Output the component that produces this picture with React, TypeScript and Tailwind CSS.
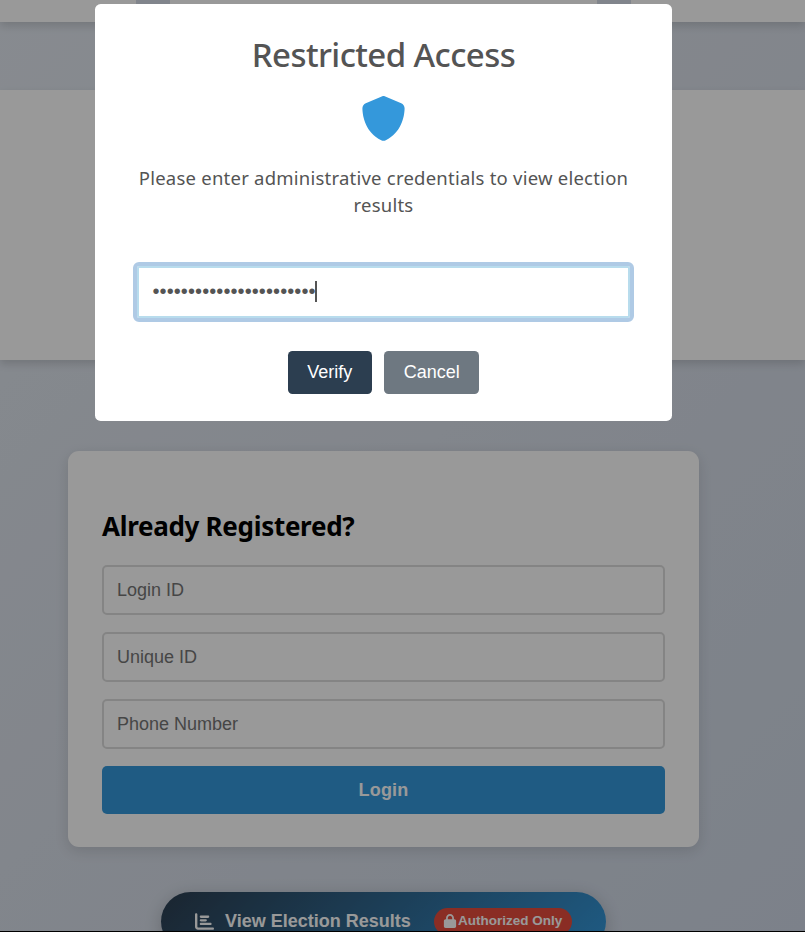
import { FaChartBar, FaLock, FaShield } from "react-icons/fa6";

const fields = ["Login ID", "Unique ID", "Phone Number"];

function Backdrop() {
  return (
    <div className="flex h-[932px] w-full flex-col overflow-hidden bg-[linear-gradient(135deg,#e2e8f0_0%,#d9dfe9_50%,#cfd8e6_100%)]">
      <div className="flex h-[22px] shrink-0 justify-between bg-white px-[136px] pr-[174px] shadow-[0_4px_8px_rgba(0,0,0,0.14)]">
        <div className="h-[9px] w-[34px] bg-[#d8deea]" />
        <div className="h-[9px] w-[34px] bg-[#d8deea]" />
      </div>
      <div className="mt-[68px] h-[270px] shrink-0 bg-white shadow-[0_4px_8px_rgba(0,0,0,0.14)]" />
      <section className="mt-[91px] ml-[68px] h-[396.4px] w-[631px] shrink-0 rounded-[11px] bg-white px-[34px] pt-[57px] shadow-[0_4px_14px_rgba(0,0,0,0.12)]">
        <h2 className="h-[36px] text-[26px] leading-[36px] font-bold tracking-[-0.3px] whitespace-nowrap text-black">
          Already Registered?
        </h2>
        <div className="mt-[21.4px] flex flex-col gap-[17px]">
          {fields.map((name) => (
            <input
              key={name}
              placeholder={name}
              className="h-[49.9px] w-full rounded-[5px] border-2 border-[#dddddd] bg-white px-[13px] pt-px font-['Liberation_Sans',Arial,sans-serif] text-[18px] placeholder:text-[#757575]"
            />
          ))}
        </div>
        <button className="mt-[16.5px] h-[48px] w-full rounded-[5px] bg-[#3498db] pt-px font-['Liberation_Sans',Arial,sans-serif] text-[18px] font-bold tracking-[0.2px] text-white">
          Login
        </button>
      </section>
      <button className="mt-[44.6px] ml-[161px] flex h-[59px] w-[445px] shrink-0 items-center rounded-full bg-[linear-gradient(135deg,#2c3e50,#3498db)] pl-[34px] font-['Liberation_Sans',Arial,sans-serif] text-[18px] font-bold text-white shadow-[0_4px_17px_rgba(0,0,0,0.2)]">
        <FaChartBar className="size-[19px]" />
        <span className="ml-[11px] pt-px whitespace-nowrap">View Election Results</span>
        <span className="ml-[23.5px] flex h-[27px] w-[138px] items-center justify-center gap-[1px] rounded-full bg-[#e74c3c] pr-px text-[13.5px] whitespace-nowrap">
          <FaLock className="size-[14px]" />
          Authorized Only
        </span>
      </button>
    </div>
  );
}

function AccessDialog() {
  return (
    <div className="absolute top-[4.4px] left-[95.2px] flex h-[416.2px] w-[576.6px] flex-col items-center rounded-[5.6px] bg-white text-[#545454]">
      <h1 className="mt-[28px] h-[46px] text-[33px] leading-[46px] font-medium tracking-[-0.58px] whitespace-nowrap">
        Restricted Access
      </h1>
      <FaShield className="mt-[17.5px] size-[45px] text-[#3498db]" />
      <p className="mt-[23.5px] w-[520px] text-center text-[18.5px] leading-[27px] tracking-[0.23px]">
        Please enter administrative credentials to view election
        <br />
        results
      </p>
      <div className="mt-[43.5px] flex h-[60px] w-[501px] items-center rounded-[6px] border-4 border-[#afcae5] bg-white pl-[15.5px] ring-[#b8dced] ring-inset ring-2">
        <span className="pb-px font-['Liberation_Sans',Arial,sans-serif] text-[20px] tracking-[0.09px]">
          •••••••••••••••••••••••
        </span>
        <span className="-ml-px h-[21px] w-[2px] bg-[#545454]" />
      </div>
      <div className="mt-[29.2px] flex gap-[12.5px] font-['Liberation_Sans',Arial,sans-serif] text-[18px] text-white">
        <button className="h-[43px] w-[84px] rounded-[4.5px] bg-[#2c3e50]">Verify</button>
        <button className="h-[43px] w-[95px] rounded-[4.5px] bg-[#6e7881]">Cancel</button>
      </div>
    </div>
  );
}

export default function App() {
  return (
    <main className="relative h-[932px] w-full overflow-hidden font-['Noto_Sans',sans-serif]">
      <Backdrop />
      <div className="absolute inset-0 border-b border-black bg-black/40" />
      <AccessDialog />
    </main>
  );
}
